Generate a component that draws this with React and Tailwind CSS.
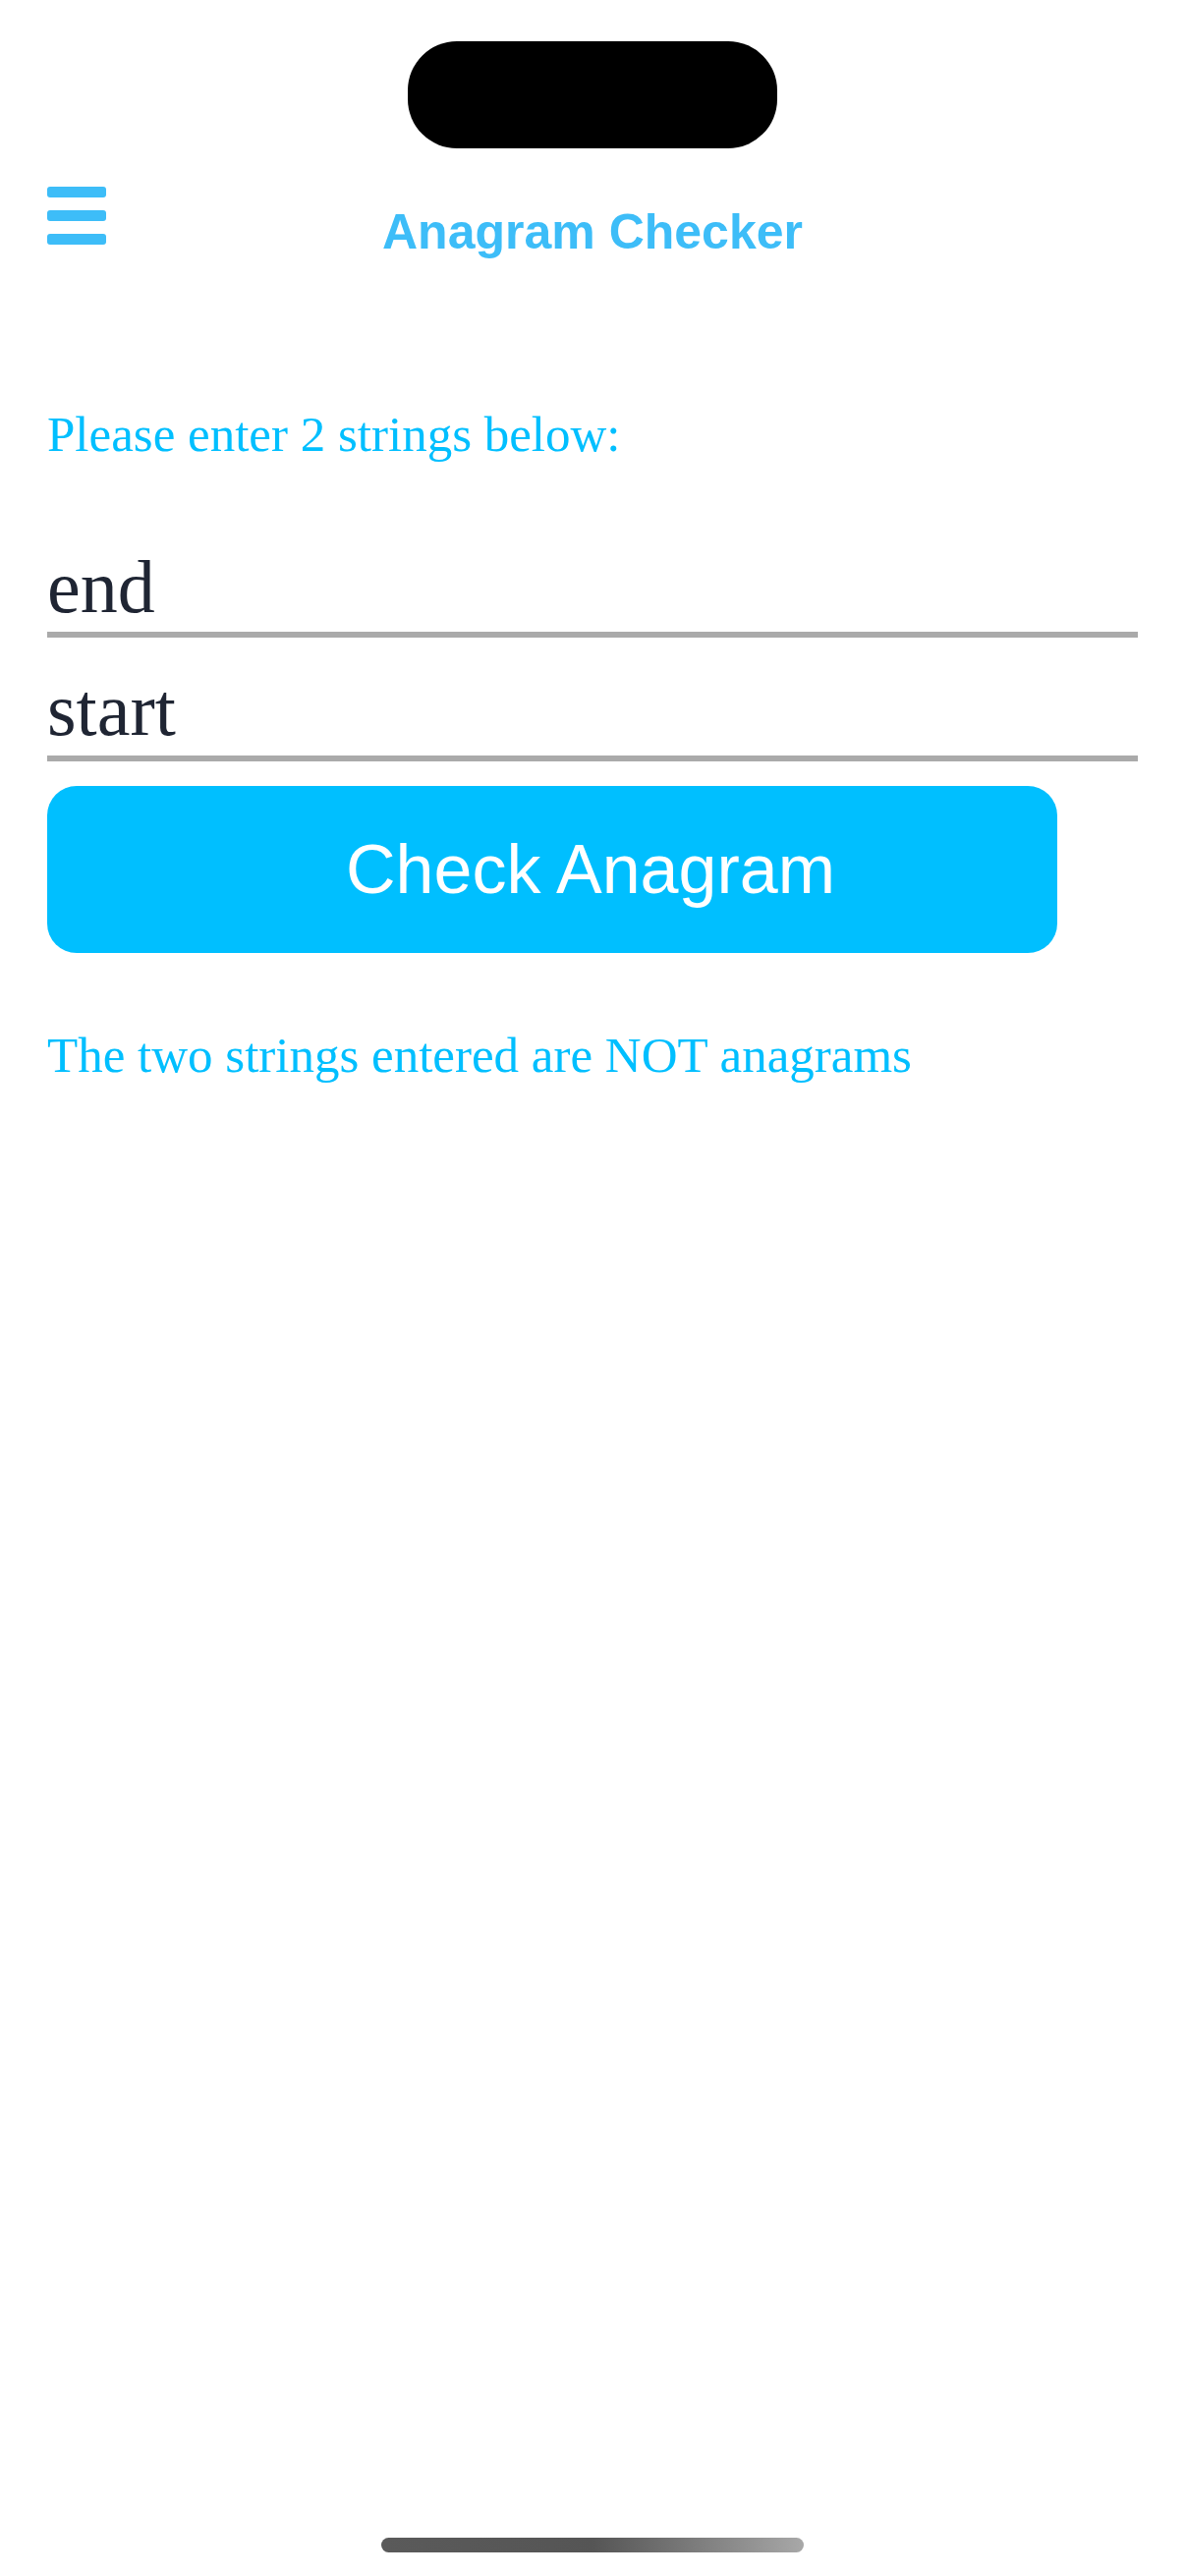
import React, { useState } from 'react';

function Hamburger() {
  return (
    <div className="flex flex-col gap-[13px] pt-px">
      <span className="block h-[11px] w-[60px] rounded-[3px] bg-[#3dbdf8]" />
      <span className="block h-[11px] w-[60px] rounded-[3px] bg-[#3dbdf8]" />
      <span className="block h-[11px] w-[60px] rounded-[3px] bg-[#3dbdf8]" />
    </div>
  );
}

function App() {
  const [first, setFirst] = useState('end');
  const [second, setSecond] = useState('start');
  const [result, setResult] = useState('The two strings entered are NOT anagrams');

  const checkAnagram = () => {
    const norm = (s) => s.toLowerCase().replace(/\s/g, '').split('').sort().join('');
    setResult(
      norm(first) === norm(second)
        ? 'The two strings entered are anagrams'
        : 'The two strings entered are NOT anagrams'
    );
  };

  const serif = { fontFamily: '"Liberation Serif", "Times New Roman", serif' };

  return (
    <div className="bg-white min-h-[2622px] w-full flex flex-col" style={{ fontFamily: '"Liberation Sans", Arial, sans-serif' }}>
      {/* dynamic island */}
      <div className="flex justify-center pt-[42px]">
        <div className="h-[109px] w-[376px] rounded-[50px] bg-black" />
      </div>

      {/* header */}
      <div className="grid grid-cols-[1fr_auto_1fr] items-start pt-[38px] px-[48px]">
        <Hamburger />
        <h1 className="mt-[22px] text-[50px] leading-none font-bold text-[#3dbdf8]">Anagram Checker</h1>
        <div />
      </div>

      <div className="flex flex-col px-[48px]">
        <p className="mt-[156px] text-[51px] leading-none text-[#00bfff]" style={serif}>
          Please enter 2 strings below:
        </p>

        <input
          value={first}
          onChange={(e) => setFirst(e.target.value)}
          className="mt-[91px] w-[1110px] h-[90px] pb-[8px] text-[76px] leading-none text-[#1f2533] border-b-[6px] border-[#aaaaaa] outline-none bg-transparent"
          style={serif}
        />
        <input
          value={second}
          onChange={(e) => setSecond(e.target.value)}
          className="mt-[35px] w-[1110px] h-[91px] pb-[9px] text-[76px] leading-none text-[#1f2533] border-b-[6px] border-[#aaaaaa] outline-none bg-transparent"
          style={serif}
        />

        <button
          onClick={checkAnagram}
          className="mt-[25px] h-[170px] w-[1028px] pl-[78px] rounded-[30px] bg-[#00bfff] text-white text-[70px] leading-none flex items-center justify-center"
        >
          Check Anagram
        </button>

        <p className="mt-[79px] text-[51px] leading-none text-[#00bfff]" style={serif}>
          {result}
        </p>
      </div>

      {/* home indicator */}
      <div className="mt-auto flex justify-center pb-[24px]">
        <div className="h-[15px] w-[430px] rounded-full bg-gradient-to-r from-[#5a5a5a] via-[#555555] to-[#a8a8a8]" />
      </div>
    </div>
  );
}

export default App;
